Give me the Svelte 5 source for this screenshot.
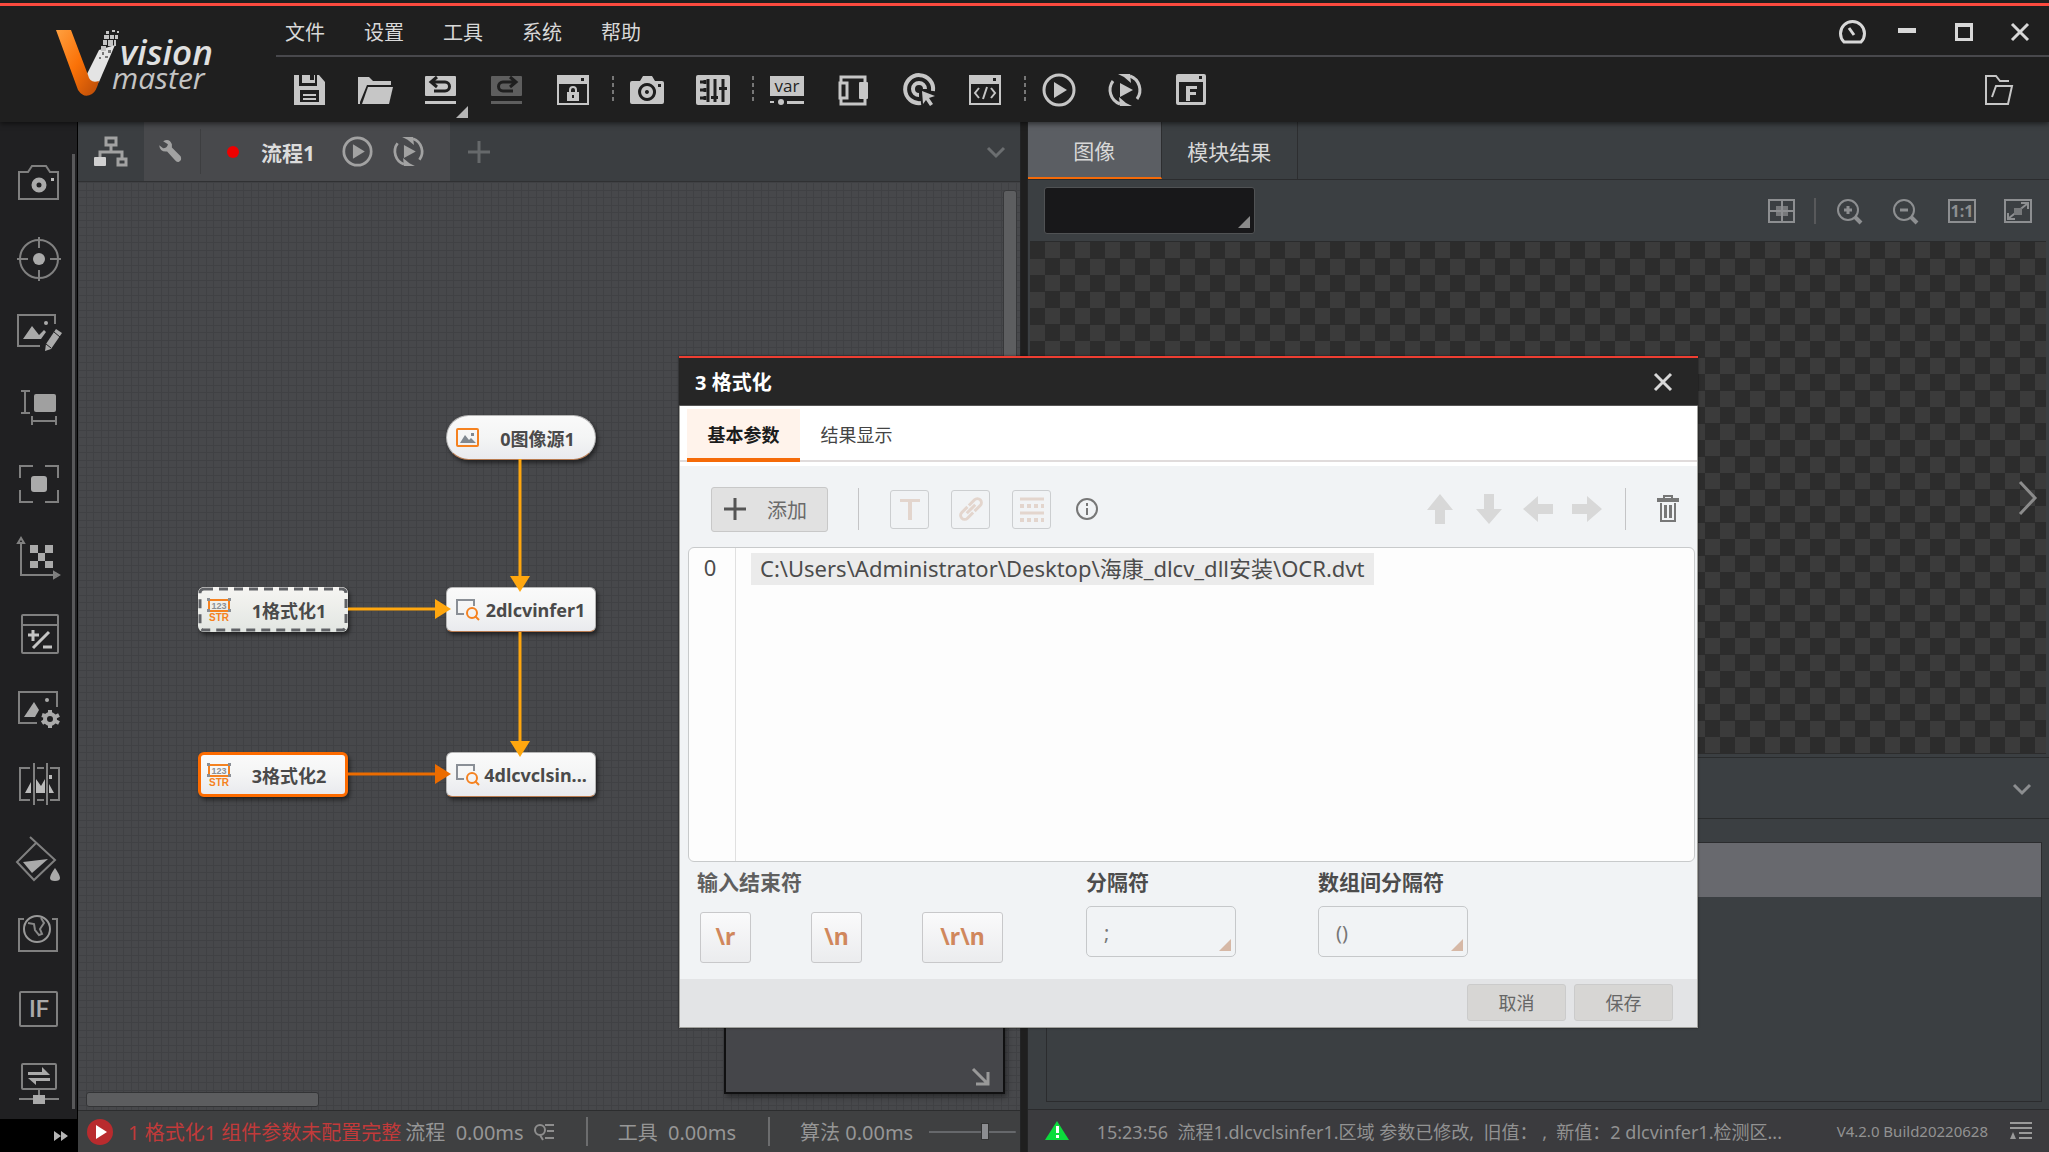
<script lang="ts">
    const menus = ["文件", "设置", "工具", "系统", "帮助"];

    const dark = "#1f1f1f";

    const icons: Record<string, string> = {
        save: `<path fill-rule="evenodd" d="M2 2h5v11h18V2h2l6 7v23H2zM8 17v12h19V17z"/><path d="M10 2h8v5h4V2h1v8H10z"/><path d="M11 21h13v2H11zM11 25h13v2H11z"/>`,
        open: `<path d="M0 4h11l4 4h18v4H9L2 29v2H0z"/><path d="M10 14h25l-4 17H4z"/>`,
        undo: `<rect x="1" y="3" width="31" height="20" rx="1"/><path d="M1 28h31v3H1z"/><path d="M9 9h12a4.500 4.500 0 0 1 0 9H10M13 4L7 9l6 5" fill="none" stroke="${dark}" stroke-width="3"/>`,
        redo: `<rect x="1" y="3" width="31" height="20" rx="1"/><path d="M1 28h31v3H1z"/><path d="M24 9H13a4.500 4.500 0 0 0 0 9h10M20 4l6 5-6 5" fill="none" stroke="${dark}" stroke-width="3"/>`,
        lock: `<path fill-rule="evenodd" d="M1 2h32v30H1zM3 11v19h28V11zM25 5v3h3V5z"/><path fill-rule="evenodd" d="M11 19h2v-2a4 4 0 0 1 8 0v2h2v9H11zM15 19h4v-2a2 2 0 0 0-4 0zM16 22v3h2v-3z"/>`,
        camera: `<path fill-rule="evenodd" d="M2 8h8l3-5h9l3 5h7q2 0 2 2v19q0 2-2 2H2q-2 0-2-2V10q0-2 2-2zM17 10a9 9 0 1 0 .1 0zM28 11v3h3v-3z"/><path fill-rule="evenodd" d="M17 13a6 6 0 1 0 .1 0zM17 17a2 2 0 1 1-.1 0z"/>`,
        sliders: `<rect x="0" y="2" width="34" height="30" rx="2"/><path d="M12 6v23M19 6v23M27 6v23" stroke="${dark}" stroke-width="3"/><path d="M4 9h5M4 17h5M4 25h5M9 7v4M9 15v4M9 23v4" stroke="${dark}" stroke-width="3"/><path d="M15 23h7v3h-7zM23 14h8v3h-8z" fill="${dark}"/>`,
        variable: `<rect x="0" y="3" width="34" height="20"/><path d="M0 28h4v2H0zM17 28h17v3H17z"/><circle cx="11" cy="29" r="3"/><text x="17" y="19" text-anchor="middle" font-family="Open Sans" font-size="17" fill="${dark}">var</text>`,
        flip: `<path d="M5 10V4h24v6M5 24v7h24v-6" fill="none" stroke="currentColor" stroke-width="3"/><path d="M4 10h7v15H4z" fill="none" stroke="currentColor" stroke-width="3"/><rect x="23" y="9" width="9" height="17" rx="1"/>`,
        target: `<path d="M19 30A14 14 0 1 1 31 18M17 22a6 6 0 1 1 6-6" fill="none" stroke="currentColor" stroke-width="4"/><path d="M20 18l13 5-6 2 4 6-3 2-4-6-3 4z"/>`,
        code: `<path fill-rule="evenodd" d="M1 2h32v30H1zM3 11v19h28V11zM25 5v3h3V5z"/><path d="M11 15l-4 5 4 5M23 15l4 5-4 5M19 14l-4 12" fill="none" stroke="currentColor" stroke-width="2"/>`,
        play: `<circle cx="17" cy="17" r="15" fill="none" stroke="currentColor" stroke-width="3"/><path d="M12 9l13 8-13 8z"/>`,
        loop: `<path d="M12 31A15 15 0 0 1 5 8M22 3a15 15 0 0 1 7 23" fill="none" stroke="currentColor" stroke-width="3"/><path d="M12 10l13 7-13 7zM10 1h12l1 9-7-6zM24 33H12l-1-9 7 6z"/>`,
        formula: `<path fill-rule="evenodd" d="M4 1h26q2 0 2 2v27q0 2-2 2H4q-2 0-2-2V3q0-2 2-2zM5 9v20h24V9zM25 3v3h3V3z"/><path d="M12 13h11v3h-7v3h6v3h-6v6h-4z"/>`,
        folder: `<path d="M8 31H4V3h10l4 5h9M10 24l4-11h16l-4 18H5" fill="none" stroke="currentColor" stroke-width="2"/>`,
        wrench: `<path d="M15 8l-6-4Q17 0 20 8v4l11 11q2 5-2 7-3 1-5-2L14 17Q5 18 4 9l5 4q5 0 6-5z"/>`,
        tree: `<path d="M12 3h10v7H12zM24 24h8v6h-8zM17 11v5M6 22v-5h22v6" fill="none" stroke="currentColor" stroke-width="3"/><rect x="0" y="22" width="12" height="9" rx="1" fill="#d0d0d0"/>`,
    };

    const toolGroups = [
        ["save", "open", "undo", "redo", "lock"],
        ["camera", "sliders"],
        ["variable", "flip", "target", "code"],
        ["play", "loop", "formula"],
    ];

    const sideIcons = [
        { name: "采集", svg: `<path d="M2 10h9l4-6h14l4 6h8v27H2z"/><circle cx="22" cy="23" r="5" stroke="#aaa" stroke-width="5"/><path d="M34 16h3v3h-3z" fill="#bbb" stroke="none"/>` },
        { name: "定位", svg: `<circle cx="22" cy="22" r="19"/><path d="M22 0v11M22 33v11M0 22h11M33 22h11"/><circle cx="22" cy="22" r="6" fill="#aaa" stroke="none"/>` },
        { name: "图像编辑", svg: `<path d="M38 12V3H1v31h22"/><path d="M6 27l9-13 7 9 5-5 2 2-5 7z" fill="#aaa" stroke="none"/><circle cx="29" cy="11" r="2" fill="#aaa" stroke="none"/><path d="M39 17l6 4-11 16-6 2 1-7z" fill="#aaa" stroke="none"/><path d="M37 20l6 5M29 32l5 4" stroke="#202022" stroke-width="1"/>` },
        { name: "测量", svg: `<path d="M4 4h9M8 4v22M4 26h9M15 29v9M15 34h24M39 29v9"/><rect x="17" y="7" width="22" height="18" rx="2" fill="#a0a0a0" stroke="none"/>` },
        { name: "识别", svg: `<path d="M3 16V4h13M28 4h13v12M41 28v12H28M16 40H3V28"/><rect x="14" y="14" width="16" height="16" rx="3" fill="#aaa" stroke="none"/>` },
        { name: "标定", svg: `<path d="M4 5v33h36M1 6l3-5 3 5zM37 35l5 3-5 3z"/><path d="M13 8h8v8h7V8h8v8h-8v8h8v7h-8v-7h-7v7h-8v-7h8v-8h-8z" fill="#aaa" stroke="none"/>` },
        { name: "运算", svg: `<rect x="5" y="3" width="36" height="38" rx="1"/><path d="M5 13h36"/><path d="M11 23h11M16 18v11M16 36l16-16M26 35h9" stroke="#c4c4c4" stroke-width="3"/>` },
        { name: "图像处理", svg: `<path d="M40 20V5H2v31h18"/><path d="M7 30l10-15 5 8-4 7z" fill="#aaa" stroke="none"/><circle cx="30" cy="13" r="2" fill="#aaa" stroke="none"/><circle cx="33" cy="32" r="5" stroke="#aaa" stroke-width="4"/><path d="M33 23v3M33 38v3M25 28l3 1M38 34l4 2M25 36l3-2M38 30l4-2" stroke="#aaa" stroke-width="4"/>` },
        { name: "颜色处理", svg: `<path d="M13 6H3v32h10M20 6h7M20 38h7M33 6h9v32h-9M17 1v42M30 1v42"/><path d="M8 31l6-11v11zM19 31V17l5 7 4-7v14zM32 31v-9l5 9zM32 13h3v4h-3z" fill="#bbb" stroke="none"/>` },
        { name: "填充", svg: `<path d="M13 0l25 23-21 20L0 25 19 6"/><path d="M6 25l25-3-16 14z" fill="#aaa" stroke="none"/><path d="M38 31q5 7 5 10t-5 3-5-3 5-10z" fill="#aaa" stroke="none"/>` },
        { name: "缺陷检测", svg: `<path d="M7 7H2v32h38V7h-5"/><circle cx="20" cy="17" r="13" stroke="#999"/><path d="M11 11l6 1 1 6 4 5 3-1-2-5 4-6-3-5" stroke="#888"/>` },
        { name: "逻辑", svg: `<rect x="3" y="5" width="37" height="34" rx="1"/><text x="22" y="30" text-anchor="middle" font-family="Roboto" font-weight="500" font-size="24" fill="#aaa" stroke="none">IF</text>` },
        { name: "通信", svg: `<rect x="5" y="2" width="34" height="25" rx="1"/><path d="M22 27v8M2 37h40"/><path d="M11 10h14V5l8 8H11zM33 16H11l8 7v-4h14z" fill="#aaa" stroke="none"/><rect x="16" y="33" width="12" height="9" fill="#aaa" stroke="none"/>` },
    ];

    const nodes = [
        { label: "0图像源1", kind: "source", x: 368, y: 233 },
        { label: "2dlcvinfer1", kind: "infer", x: 368, y: 405 },
        { label: "1格式化1", kind: "format dashed", x: 120, y: 405 },
        { label: "3格式化2", kind: "format active", x: 120, y: 570 },
        { label: "4dlcvclsin...", kind: "infer", x: 368, y: 570 },
    ];

    const endings = ["\\r", "\\n", "\\r\\n"];

    let separator = ";";
    let arraySeparator = "()";
</script>

<div class="app">
    <header class="header">
        <svg class="logo" viewBox="0 0 276 116" role="img" aria-label="Vision Master">
            <defs>
                <linearGradient id="orange" x1="0" y1="0" x2="1" y2="1">
                    <stop offset="0" stop-color="#ffa040" />
                    <stop offset="0.500" stop-color="#fa7208" />
                    <stop offset="1" stop-color="#b84a08" />
                </linearGradient>
            </defs>
            <path d="M99 44l16-5-16 37q-5 5-9 2-4-3-3-10z" fill="#e4e4e4" />
            <path d="M106 25h3v3h-3zM112 24h3v2h-3zM117 25h2v2h-2zM104 29h5v4h-5zM110 29h4v4h-4zM115 29h3v4h-3zM103 34h4v5h-4zM108 34h5v6h-5zM114 34h2v6h-2zM101 40h5v5h-5z" fill="#c4c4c4" />
            <path d="M102 46h2v3h-2zM108 44h3v3h-3zM105 50h3v2h-3zM99 51h2v2h-2z" fill="#777" />
            <path d="M56 24h15l17 45q2 9 11 6-3 11-7 13-8 5-14-4z" fill="url(#orange)" />
            <text class="logo-bold" x="120" y="59">vision</text>
            <text class="logo-light" x="112" y="83">master</text>
        </svg>
        <div class="header-main">
            <div class="menu-row">
                <nav class="menu">
                    {#each menus as menu}
                        <button type="button">{menu}</button>
                    {/each}
                </nav>
                <div class="window-buttons">
                    <button type="button" aria-label="性能">
                        <svg viewBox="0 0 28 28"><path d="M6 24a12 12 0 1 1 17 0zM11 10l5 7" fill="none" stroke="currentColor" stroke-width="3" /></svg>
                    </button>
                    <button type="button" aria-label="最小化">
                        <svg viewBox="0 0 28 28"><path d="M4 10h18v5H4z" fill="currentColor" /></svg>
                    </button>
                    <button type="button" aria-label="最大化">
                        <svg viewBox="0 0 28 28"><path fill-rule="evenodd" d="M5 5h18v18H5zM8 9v11h12V9z" fill="currentColor" /></svg>
                    </button>
                    <button type="button" aria-label="关闭">
                        <svg viewBox="0 0 28 28"><path d="M6 6l16 16M22 6L6 22" stroke="currentColor" stroke-width="3" /></svg>
                    </button>
                </div>
            </div>
            <div class="tool-row">
                {#each toolGroups as group, g}
                    {#if g > 0}
                        <span class="dash-line"></span>
                    {/if}
                    {#each group as tool}
                        <button type="button" class="tool" class:disabled={tool == "redo"} class:has-menu={tool == "undo"} aria-label={tool}>
                            <svg viewBox="0 0 34 34">{@html icons[tool]}</svg>
                        </button>
                    {/each}
                {/each}
                <button type="button" class="tool last" aria-label="folder">
                    <svg viewBox="0 0 34 34">{@html icons.folder}</svg>
                </button>
            </div>
        </div>
    </header>

    <div class="workspace">
        <aside class="sidebar">
            <div class="side-list">
                {#each sideIcons as item}
                    <button type="button" aria-label={item.name}>
                        <svg viewBox="0 0 44 44">{@html item.svg}</svg>
                    </button>
                {/each}
            </div>
            <button type="button" class="expand" aria-label="展开">
                <svg viewBox="0 0 16 10"><path d="M1 0l7 5-7 5zM8 0l7 5-7 5z" fill="#b5b5b5" /></svg>
            </button>
        </aside>

        <section class="flow">
            <div class="flow-tabs">
                <button type="button" class="tree" aria-label="流程树">
                    <svg viewBox="0 0 34 34">{@html icons.tree}</svg>
                </button>
                <div class="flow-tab">
                    <button type="button" class="wrench" aria-label="设置">
                        <svg viewBox="0 0 34 34">{@html icons.wrench}</svg>
                    </button>
                    <span class="dot"></span>
                    <span class="flow-name">流程1</span>
                    <button type="button" class="run" aria-label="运行">
                        <svg viewBox="0 0 34 34">{@html icons.play}</svg>
                    </button>
                    <button type="button" class="run" aria-label="循环运行">
                        <svg viewBox="0 0 34 34">{@html icons.loop}</svg>
                    </button>
                </div>
                <button type="button" class="add-flow" aria-label="新建流程">
                    <svg viewBox="0 0 22 22"><path d="M11 0v22M0 11h22" stroke="#66696b" stroke-width="3" /></svg>
                </button>
                <button type="button" class="flow-more" aria-label="更多">
                    <svg viewBox="0 0 18 18"><path d="M1 5l8 8 8-8" fill="none" stroke="#6b6e70" stroke-width="3" /></svg>
                </button>
            </div>

            <div class="canvas">
                <svg class="links" width="700" height="700">
                    <g stroke="#ffa70f" stroke-width="3" fill="#ffa70f">
                        <path d="M442 277v118M442 450v110M270 427h90" />
                        <path stroke="none" d="M432 394h20l-10 16zM432 559h20l-10 16zM357 417l16 10-16 10z" />
                    </g>
                    <g stroke="#ec6c00" stroke-width="3" fill="#ec6c00">
                        <path d="M270 592h90" />
                        <path stroke="none" d="M357 582l16 10-16 10z" />
                    </g>
                </svg>
                {#each nodes as node}
                    <div class="node {node.kind}" style="left: {node.x}px; top: {node.y}px">
                        {#if node.kind == "format dashed"}
                            <svg class="outline" viewBox="0 0 150 45" aria-hidden="true"><rect x="2" y="2" width="146" height="41" rx="4" /></svg>
                        {/if}
                        <svg class="node-icon" viewBox="0 0 24 24" aria-hidden="true">
                            {#if node.kind == "source"}
                                <rect x="1" y="3" width="21" height="17" rx="1" fill="none" stroke="#f58220" stroke-width="2" />
                                <path d="M4 17l5-8 4 5 2-2 5 5zM15 7h3v3h-3z" fill="#808890" />
                            {:else if node.kind == "infer"}
                                <path d="M8 16H1V2h17v6" fill="none" stroke="#8a8f96" stroke-width="2" />
                                <circle cx="16" cy="15" r="5" fill="none" stroke="#f58220" stroke-width="2" />
                                <path d="M19 18l4 4" stroke="#f58220" stroke-width="2" />
                            {:else}
                                <path d="M2 2h20v11H2z" fill="none" stroke="#f58220" stroke-width="2" />
                                <path d="M0 0h3v3H0zM21 0h3v3h-3zM0 11h3v3H0zM21 11h3v3h-3z" fill="#8a8f96" />
                                <text x="12" y="11" text-anchor="middle" class="icon-num">123</text>
                                <text x="12" y="23" text-anchor="middle" class="icon-str">STR</text>
                            {/if}
                        </svg>
                        <span>{node.label}</span>
                    </div>
                {/each}
                <div class="minimap">
                    <svg viewBox="0 0 18 18"><path d="M1 1l14 14M16 4v12H4" fill="none" stroke="#999" stroke-width="3" /></svg>
                </div>
                <div class="scroll-y"></div>
                <div class="scroll-x"></div>
            </div>

            <footer class="flow-status">
                <svg class="status-play" viewBox="0 0 28 28"><circle cx="14" cy="14" r="13" fill="#b92b2e" /><path d="M10 7l11 7-11 7z" fill="#fff" /></svg>
                <span class="error">1 格式化1 组件参数未配置完整</span>
                <span>流程&nbsp; 0.00ms</span>
                <svg class="status-detail" viewBox="0 0 20 18"><circle cx="6" cy="7" r="5" fill="none" stroke="#8e8e8e" stroke-width="2" /><path d="M6 12l3 5M11 2h9M13 8h7M11 15h9" stroke="#8e8e8e" stroke-width="2" /></svg>
                <span class="bar"></span>
                <span>工具&nbsp; 0.00ms</span>
                <span class="bar"></span>
                <span>算法&nbsp;0.00ms</span>
                <input type="range" min="0" max="100" value="66" aria-label="缩放" />
            </footer>
        </section>

        <section class="result">
            <div class="result-tabs">
                <button type="button" class="selected">图像</button>
                <button type="button">模块结果</button>
            </div>
            <div class="image-tools">
                <div class="image-select">
                    <select aria-label="图像"><option></option></select>
                </div>
                <div class="image-buttons">
                    <button type="button" aria-label="网格">
                        <svg viewBox="0 0 28 28"><rect x="8" y="9" width="12" height="10" fill="#77797b" stroke="none" /><path d="M1 3h25v22H1zM14 3v22M1 14h25" /></svg>
                    </button>
                    <span class="thin"></span>
                    <button type="button" aria-label="放大">
                        <svg viewBox="0 0 28 28"><circle cx="12" cy="13" r="10" /><path d="M19 20l6 6" stroke-width="4" /><path d="M8 13h8M12 9v8" stroke-width="3" /></svg>
                    </button>
                    <button type="button" aria-label="缩小">
                        <svg viewBox="0 0 28 28"><circle cx="12" cy="13" r="10" /><path d="M19 20l6 6" stroke-width="4" /><path d="M8 13h8" stroke-width="3" /></svg>
                    </button>
                    <button type="button" aria-label="原始比例">
                        <svg viewBox="0 0 28 28"><path d="M1 3h26v22H1z" /><text x="14" y="20" text-anchor="middle" class="ratio">1:1</text></svg>
                    </button>
                    <button type="button" aria-label="自适应">
                        <svg viewBox="0 0 28 28"><path d="M1 3h26v22H1zM5 21L23 7M17 6h7v6M4 16v6h7" /><path d="M10 11h8v7h-8z" fill="#77797b" stroke="none" /></svg>
                    </button>
                </div>
            </div>
            <div class="viewer">
                <button type="button" aria-label="下一个">
                    <svg viewBox="0 0 20 36"><path d="M2 2l15 16L2 34" fill="none" stroke="#8b8b8b" stroke-width="3" /></svg>
                </button>
            </div>
            <div class="result-head">
                <button type="button" aria-label="收起">
                    <svg viewBox="0 0 18 18"><path d="M1 5l8 8 8-8" fill="none" stroke="#8c8e90" stroke-width="3" /></svg>
                </button>
            </div>
            <div class="result-body">
                <div class="result-list"><div class="result-row"></div></div>
            </div>
            <footer class="log-status">
                <svg class="warn" viewBox="0 0 24 20"><path d="M12 0l12 19H0z" fill="#0cdc3c" /><path d="M11 5h3v7h-3zM11 14h3v3h-3z" fill="#fff" /></svg>
                <span class="log">15:23:56&nbsp; 流程1.dlcvclsinfer1.区域 参数已修改,&nbsp; 旧值：&nbsp;,&nbsp; 新值：2 dlcvinfer1.检测区...</span>
                <span class="version">V4.2.0 Build20220628</span>
                <svg class="log-icon" viewBox="0 0 22 18"><path d="M0 1h22M0 6h22M9 11h13M9 16h13" stroke="#9a9a9a" stroke-width="2" /><path d="M3 10l3 7H0z" fill="#9a9a9a" /></svg>
            </footer>
        </section>
    </div>

    <div class="dialog" role="dialog" aria-labelledby="dialog-title">
        <div class="dialog-title">
            <h2 id="dialog-title">3 格式化</h2>
            <button type="button" aria-label="关闭">
                <svg viewBox="0 0 20 20"><path d="M2 2l16 16M18 2L2 18" stroke="#d8d8d8" stroke-width="3" /></svg>
            </button>
        </div>
        <div class="dialog-tabs">
            <button type="button" class="selected">基本参数</button>
            <button type="button">结果显示</button>
        </div>
        <div class="dialog-body">
            <div class="edit-tools">
                <button type="button" class="add">
                    <svg viewBox="0 0 22 22"><path d="M11 0v22M0 11h22" stroke="#555" stroke-width="3" /></svg>
                    添加
                </button>
                <span class="thin"></span>
                <div class="insert">
                    <button type="button" aria-label="文本">
                        <svg viewBox="0 0 28 28"><path d="M4 4h20v3h-8v18h-4V7H4z" fill="#e3d5cd" /></svg>
                    </button>
                    <button type="button" aria-label="链接">
                        <svg viewBox="0 0 28 28"><g fill="none" stroke="#e3d5cd" stroke-width="3" transform="rotate(-45 14 14)"><path d="M13 10H5a4 4 0 0 0 0 8h8M15 10h8a4 4 0 0 1 0 8h-8M8 14h12" /></g></svg>
                    </button>
                    <button type="button" aria-label="分隔">
                        <svg viewBox="0 0 28 28"><path d="M2 4h24M2 18h24" stroke="#e3d5cd" stroke-width="3" /><path d="M2 11h24M2 25h24" stroke="#e3d5cd" stroke-width="4" stroke-dasharray="4 3" /></svg>
                    </button>
                </div>
                <svg class="info" viewBox="0 0 24 24"><circle cx="12" cy="12" r="10" fill="none" stroke="#777" stroke-width="2" /><path d="M11 6h2v3h-2zM11 11h2v7h-2z" fill="#777" /></svg>
                <div class="moves">
                    <button type="button" aria-label="上移">
                        <svg viewBox="0 0 30 30"><path d="M15 0l13 16h-8v14H10V16H2z" /></svg>
                    </button>
                    <button type="button" aria-label="下移">
                        <svg viewBox="0 0 30 30"><path d="M15 30L2 15h8V0h10v15h8z" /></svg>
                    </button>
                    <button type="button" aria-label="左移">
                        <svg viewBox="0 0 30 30"><path d="M0 15L15 2v8h15v10H15v8z" /></svg>
                    </button>
                    <button type="button" aria-label="右移">
                        <svg viewBox="0 0 30 30"><path d="M30 15L15 2v8H0v10h15v8z" /></svg>
                    </button>
                </div>
                <span class="thin"></span>
                <button type="button" class="trash" aria-label="删除">
                    <svg viewBox="0 0 22 28"><path d="M4 8v18h14V8M7 4V1h8v3" fill="none" stroke="#777" stroke-width="2" /><path d="M0 3h22v4H0zM7 10h3v13H7zM12 10h3v13h-3z" fill="#777" /></svg>
                </button>
            </div>

            <div class="editor">
                <div class="gutter">0</div>
                <div class="lines"><span class="chip">C:\Users\Administrator\Desktop\海康_dlcv_dll安装\OCR.dvt</span></div>
            </div>

            <div class="options">
                <div class="group endings">
                    <span class="caption">输入结束符</span>
                    <div class="ending-row">
                        {#each endings as ending}
                            <button type="button" class:wide={ending.length > 2}>{ending}</button>
                        {/each}
                    </div>
                </div>
                <div class="group">
                    <label for="separator">分隔符</label>
                    <div class="pick">
                        <select id="separator" bind:value={separator}><option>;</option></select>
                    </div>
                </div>
                <div class="group">
                    <label for="array-separator">数组间分隔符</label>
                    <div class="pick">
                        <select id="array-separator" bind:value={arraySeparator}><option>()</option></select>
                    </div>
                </div>
            </div>
        </div>
        <div class="dialog-foot">
            <button type="button">取消</button>
            <button type="button">保存</button>
        </div>
    </div>
</div>

<style>
    :global(body) {
        margin: 0;
        background: #1f1f1f;
    }

    .app {
        position: relative;
        display: flex;
        flex-direction: column;
        height: 100vh;
        overflow: hidden;
        font-family: "Noto Sans", "Noto Sans CJK SC", sans-serif;
        font-size: 20px;
        color: #d8d8d8;
    }

    .app * {
        box-sizing: border-box;
    }

    svg {
        display: block;
        flex: none;
        overflow: visible;
    }

    button {
        display: flex;
        align-items: center;
        justify-content: center;
        padding: 0;
        border: 0;
        background: none;
        color: inherit;
        font: inherit;
        cursor: pointer;
    }

    select {
        appearance: none;
        width: 100%;
        height: 100%;
        padding: 0 20px;
        border: 0;
        background: none;
        color: inherit;
        font: inherit;
    }

    /* header */
    .header {
        position: relative;
        z-index: 1;
        display: flex;
        flex: none;
        height: 122px;
        padding-top: 3px;
        background: linear-gradient(#1f1f1f 3px, #fb4a3e 3px, #fb4a3e 6px, #1f1f1f 6px);
        box-shadow: 0 2px 5px rgba(0, 0, 0, 0.5);
    }

    .logo {
        width: 276px;
        height: 116px;
        margin-top: 3px;
    }

    .logo-bold {
        font: italic 600 35px "Open Sans", sans-serif;
        fill: #e0e0e0;
    }

    .logo-light {
        font: italic 400 30px "Open Sans", sans-serif;
        fill: #c4c4c4;
    }

    .header-main {
        display: flex;
        flex: 1;
        flex-direction: column;
    }

    .menu-row {
        display: flex;
        justify-content: space-between;
        height: 54px;
        border-bottom: 2px solid #48484c;
    }

    .menu {
        display: flex;
        gap: 39px;
        padding-left: 9px;
        padding-top: 5px;
    }

    .window-buttons {
        display: flex;
        align-items: center;
        gap: 28px;
        padding-right: 15px;
        padding-top: 6px;
    }

    .window-buttons svg {
        width: 28px;
        height: 28px;
    }

    .tool-row {
        display: flex;
        align-items: center;
        flex: 1;
    }

    .tool {
        position: relative;
        width: 66px;
        height: 62px;
        color: #c6c6c6;
    }

    .tool svg {
        width: 34px;
        height: 34px;
        fill: currentColor;
    }

    .tool.disabled {
        color: #5e5e5e;
    }

    .tool.has-menu::after {
        content: "";
        position: absolute;
        right: 6px;
        bottom: 3px;
        border-left: 12px solid transparent;
        border-bottom: 12px solid #b5b5b5;
    }

    .tool.last {
        margin-left: auto;
        margin-right: 17px;
    }

    .dash-line {
        width: 8px;
        height: 28px;
        background: repeating-linear-gradient(#777 0 4px, transparent 4px 7px) right / 2px 100% no-repeat;
    }

    .workspace {
        display: grid;
        grid-template-columns: 78px 11fr 12fr;
        flex: 1;
        min-height: 0;
    }

    /* module toolbar on the left */
    .sidebar {
        display: flex;
        flex-direction: column;
        min-height: 0;
        background: #202022;
        border-right: 1px solid #000;
    }

    .side-list {
        flex: 1;
        min-height: 0;
        padding-top: 24px;
        overflow: hidden;
        background: linear-gradient(#58585a, #58585a) 72px 32px / 3px calc(100% - 42px) no-repeat;
    }

    .side-list button {
        width: 78px;
        height: 75px;
    }

    .side-list svg {
        width: 44px;
        height: 44px;
        fill: none;
        stroke: #808080;
        stroke-width: 2;
    }

    .expand {
        justify-content: flex-end;
        height: 33px;
        padding-right: 8px;
        background: #000;
    }

    .expand svg {
        width: 16px;
        height: 10px;
    }

    /* flow editor */
    .flow {
        display: flex;
        flex-direction: column;
        min-width: 0;
        min-height: 0;
        background: #3c3f41;
        border-right: 1px solid #232425;
    }

    .flow-tabs {
        display: flex;
        align-items: center;
        height: 60px;
        background: #3b3e41;
        border-bottom: 1px solid #303133;
        color: #a2a2a2;
    }

    .flow-tabs svg {
        fill: currentColor;
    }

    .tree {
        width: 66px;
        height: 100%;
    }

    .tree svg {
        width: 34px;
        height: 34px;
    }

    .flow-tab {
        display: flex;
        align-items: center;
        height: 100%;
        width: 306px;
        background: #48494c;
    }

    .wrench {
        width: 57px;
        height: 45px;
        padding-right: 6px;
        border-right: 1px solid #3d3e40;
    }

    .wrench svg {
        width: 27px;
        height: 27px;
    }

    .dot {
        width: 12px;
        height: 12px;
        margin-left: 26px;
        border-radius: 50%;
        background: #ee0000;
    }

    .flow-name {
        margin-left: 22px;
        margin-right: 27px;
        color: #dcdcdc;
        font-size: 21px;
        font-weight: 700;
    }

    .run {
        margin-right: 20px;
    }

    .run svg {
        width: 31px;
        height: 31px;
    }

    .add-flow {
        margin-left: 18px;
    }

    .add-flow svg {
        width: 22px;
        height: 22px;
    }

    .flow-more {
        margin-left: auto;
        margin-right: 15px;
    }

    .flow-more svg {
        width: 18px;
        height: 18px;
    }

    .canvas {
        position: relative;
        flex: 1;
        min-height: 0;
        overflow: hidden;
        background-color: #47484b;
        background-image: linear-gradient(#404144 1px, transparent 1px, transparent 8px, #404144 8px, #404144 9px, transparent 9px),
            linear-gradient(90deg, #404144 1px, transparent 1px, transparent 8px, #404144 8px, #404144 9px, transparent 9px);
        background-size: 15px 15px;
    }

    .links {
        position: absolute;
        left: 0;
        top: 0;
        z-index: 1;
        pointer-events: none;
    }

    .node {
        position: absolute;
        display: flex;
        align-items: center;
        width: 150px;
        height: 45px;
        padding: 0 4px 0 9px;
        border: 1px solid #b5b5b5;
        border-bottom-color: #b87b50;
        border-radius: 6px;
        background: linear-gradient(#fafafa, #f4f5f5 50%, #e9eaee);
        box-shadow: 2px 3px 4px rgba(0, 0, 0, 0.5);
        color: #4a4a4a;
        font-size: 18px;
        font-weight: 700;
        white-space: nowrap;
    }

    .node-icon {
        width: 24px;
        height: 24px;
    }

    .node span {
        flex: 1;
        text-align: center;
    }

    .node.source {
        border-radius: 23px;
    }

    .node.source span,
    .node.format span {
        padding-left: 4px;
    }

    .node.dashed {
        padding: 0 5px 0 9px;
        border: 0;
        background: linear-gradient(#f6f5f2, #e2e6e2);
    }

    .outline {
        position: absolute;
        inset: 0;
        width: 100%;
        height: 100%;
        fill: none;
        stroke: #606266;
        stroke-width: 3;
        stroke-dasharray: 9 6;
    }

    .node.active {
        padding: 0 2px 0 6px;
        border: 3px solid #fd6b00;
    }

    .icon-num {
        font: 700 9px "Liberation Sans", sans-serif;
        fill: #8a8f96;
    }

    .icon-str {
        font: 700 10px "Liberation Sans", sans-serif;
        fill: #f58220;
    }

    .minimap {
        position: absolute;
        right: 15px;
        bottom: 16px;
        display: flex;
        align-items: flex-end;
        justify-content: flex-end;
        width: 281px;
        height: 190px;
        padding: 6px 13px;
        border: 2px solid #101011;
        background: #45464a;
        box-shadow: 2px 3px 5px rgba(0, 0, 0, 0.4);
    }

    .minimap svg {
        width: 18px;
        height: 18px;
    }

    .scroll-y {
        position: absolute;
        top: 8px;
        right: 3px;
        width: 14px;
        height: 400px;
        border: 1px solid #37383a;
        border-radius: 3px;
        background: #5d5e60;
    }

    .scroll-x {
        position: absolute;
        left: 8px;
        bottom: 3px;
        width: 233px;
        height: 15px;
        border: 1px solid #333436;
        border-radius: 3px;
        background: #5c5d5f;
    }

    .flow-status {
        display: flex;
        align-items: center;
        height: 42px;
        padding-left: 8px;
        border-top: 1px solid #2c2d2e;
        background: #3f4041;
        color: #969696;
        white-space: nowrap;
    }

    .status-play {
        width: 28px;
        height: 28px;
        margin-right: 14px;
    }

    .error {
        margin-right: 4px;
        color: #c23a3a;
    }

    .status-detail {
        width: 20px;
        height: 18px;
        margin-left: 10px;
    }

    .bar {
        width: 2px;
        height: 29px;
        margin: 0 30px 0 32px;
        background: #6c6d6e;
    }

    .flow-status input {
        appearance: none;
        flex: 1;
        min-width: 40px;
        height: 18px;
        margin: 0 4px 0 16px;
        background: linear-gradient(#66686b, #66686b) center / 100% 2px no-repeat;
    }

    .flow-status input::-webkit-slider-thumb {
        appearance: none;
        width: 8px;
        height: 17px;
        border: 1px solid #333;
        background: #8c8d90;
    }

    /* result panel */
    .result {
        display: flex;
        flex-direction: column;
        min-width: 0;
        min-height: 0;
        border-left: 1px solid #232425;
        margin-left: 6px;
        background: #3b3f42;
    }

    .result-tabs {
        display: flex;
        height: 58px;
        border-bottom: 1px solid #2b2c2e;
        font-size: 21px;
    }

    .result-tabs button {
        width: 136px;
        border-right: 1px solid #2d2e30;
    }

    .result-tabs .selected {
        width: 134px;
        border-bottom: 2px solid #f56a08;
        background: #5b5e63;
    }

    .image-tools {
        display: flex;
        align-items: center;
        justify-content: space-between;
        height: 61px;
        padding: 0 17px 0 16px;
    }

    .image-select {
        position: relative;
        width: 211px;
        height: 47px;
        border: 1px solid #505254;
        border-radius: 3px;
        background: #18181a;
    }

    .image-select::after,
    .pick::after {
        content: "";
        position: absolute;
        right: 4px;
        bottom: 5px;
        border-left: 12px solid transparent;
        border-bottom: 12px solid #8a8a8a;
        pointer-events: none;
    }

    .image-buttons {
        display: flex;
        align-items: center;
        gap: 28px;
    }

    .image-buttons svg {
        width: 28px;
        height: 28px;
        fill: none;
        stroke: #8d8f91;
        stroke-width: 2;
    }

    .image-buttons .thin {
        width: 2px;
        height: 26px;
        margin: 0 -8px 0 -10px;
        background: #58595b;
    }

    .image-buttons .ratio {
        font: 700 16px "Open Sans", sans-serif;
        fill: #8d8f91;
        stroke: none;
    }

    .viewer {
        display: flex;
        align-items: center;
        justify-content: flex-end;
        flex: 1;
        min-height: 200px;
        margin: 0 3px 0 2px;
        padding-right: 8px;
        border-top: 1px solid #2a2b2c;
        background: repeating-conic-gradient(#3b3b3b 0 25%, #2c2c2c 0 50%) 0 0 / 30px 33px;
    }

    .viewer svg {
        width: 20px;
        height: 36px;
    }

    .result-head {
        display: flex;
        align-items: center;
        justify-content: flex-end;
        height: 65px;
        padding-top: 6px;
        padding-right: 18px;
        border-bottom: 1px solid #2a2c2d;
        background: linear-gradient(#2a2c2d, #2a2c2d) 0 3px / 100% 1px no-repeat;
    }

    .result-head svg {
        width: 18px;
        height: 18px;
    }

    .result-body {
        height: 290px;
        padding: 23px 7px 7px 18px;
    }

    .result-list {
        height: 100%;
        border: 1px solid #2b2c2e;
    }

    .result-row {
        height: 54px;
        background: #68696e;
    }

    .log-status {
        display: flex;
        align-items: center;
        height: 43px;
        padding: 0 17px;
        border-top: 1px solid #2a2b2d;
        background: #3b3b3e;
        color: #929292;
        font-size: 18px;
        white-space: nowrap;
    }

    .warn {
        width: 24px;
        height: 20px;
        margin-right: 28px;
    }

    .log {
        flex: 1;
    }

    .version {
        margin-right: 22px;
        font-size: 15px;
    }

    .log-icon {
        width: 22px;
        height: 18px;
    }

    /* dialog */
    .dialog {
        position: absolute;
        left: 679px;
        right: 351px;
        top: 356px;
        z-index: 2;
        border: 1px solid #a0a09c;
        border-top: 0;
        background: #f1f3f5;
        box-shadow: 0 0 2px rgba(0, 0, 0, 0.6);
        color: #4c4c4c;
    }

    .dialog-title {
        display: flex;
        align-items: center;
        justify-content: space-between;
        height: 50px;
        margin: 0 -1px;
        padding: 0 25px 0 16px;
        border-top: 2px solid #ee3e32;
        border-bottom: 1px solid #555;
        background: #262626;
        color: #fff;
    }

    .dialog-title h2 {
        margin: 0;
        font-size: 20px;
        font-weight: 700;
    }

    .dialog-title svg {
        width: 20px;
        height: 20px;
    }

    .dialog-tabs {
        display: flex;
        height: 60px;
        padding: 3px 0 4px 7px;
        background: linear-gradient(#e0dbdb, #e0dbdb) 0 54px / 100% 2px no-repeat #fff;
        font-size: 18px;
    }

    .dialog-tabs button {
        width: 113px;
        border-bottom: 4px solid transparent;
        color: #444;
    }

    .dialog-tabs .selected {
        border-bottom-color: #f56a08;
        background: #fff3eb;
        color: #1c1c1c;
        font-weight: 700;
    }

    .edit-tools {
        display: flex;
        align-items: center;
        height: 81px;
        padding: 5px 18px 0 31px;
    }

    .add {
        gap: 21px;
        width: 117px;
        height: 45px;
        padding-right: 8px;
        border: 1px solid #c8c8c8;
        border-radius: 3px;
        background: #e1e1e1;
        color: #6a6a6a;
    }

    .add svg {
        width: 22px;
        height: 22px;
    }

    .edit-tools .thin {
        width: 1px;
        height: 42px;
        margin: 0 31px 0 30px;
        background: #c4c4c6;
    }

    .insert {
        display: flex;
        gap: 22px;
    }

    .insert button {
        width: 39px;
        height: 39px;
        border: 1px solid #ccced0;
        border-radius: 3px;
    }

    .insert svg {
        width: 28px;
        height: 28px;
    }

    .info {
        width: 24px;
        height: 24px;
        margin-left: 24px;
    }

    .moves {
        display: flex;
        gap: 19px;
        margin-left: auto;
        margin-right: -7px;
    }

    .moves svg {
        width: 30px;
        height: 30px;
        fill: #d8d8d8;
    }

    .trash svg {
        width: 22px;
        height: 28px;
    }

    .editor {
        display: flex;
        height: 315px;
        margin: 0 2px 0 8px;
        border: 1px solid #c8cacb;
        border-radius: 6px;
        background: #fdfdfd;
        font-size: 22px;
        line-height: 30px;
    }

    .gutter {
        width: 47px;
        padding-top: 4px;
        padding-right: 4px;
        border-right: 1px solid #e0e0e0;
        text-align: center;
    }

    .lines {
        padding: 5px 15px;
    }

    .chip {
        display: block;
        padding: 0 9px 2px;
        background: #ebebeb;
        white-space: nowrap;
    }

    .options {
        display: flex;
        height: 117px;
        padding: 5px 0 0 17px;
    }

    .group {
        width: 232px;
        line-height: 30px;
    }

    .group.endings {
        width: 389px;
    }

    .caption,
    .group label {
        font-size: 21px;
        font-weight: 700;
    }

    .caption {
        color: #5f5f5f;
    }

    .ending-row {
        display: flex;
        gap: 60px;
        padding: 14px 3px;
    }

    .ending-row button {
        width: 51px;
        height: 51px;
        padding-bottom: 3px;
        border: 1px solid #c8c8ca;
        border-radius: 3px;
        background: linear-gradient(#fafafb, #ebecee);
        color: #d0875c;
        font-size: 23px;
        font-weight: 700;
    }

    .ending-row .wide {
        width: 81px;
    }

    .pick {
        position: relative;
        width: 150px;
        height: 51px;
        margin-top: 8px;
        border: 1px solid #c6c8ca;
        border-radius: 5px;
        color: #777;
    }

    .pick::after {
        border-bottom-color: #d6b8a6;
    }

    .pick select {
        padding: 3px 17px 0;
    }

    .dialog-foot {
        display: flex;
        align-items: center;
        justify-content: flex-end;
        gap: 8px;
        height: 48px;
        padding: 0 24px 2px;
        background: #e3e4e6;
        font-size: 18px;
    }

    .dialog-foot button {
        width: 99px;
        height: 37px;
        border: 1px solid #cbcbcb;
        border-radius: 3px;
        background: #d7d6d4;
        color: #666;
    }
</style>
